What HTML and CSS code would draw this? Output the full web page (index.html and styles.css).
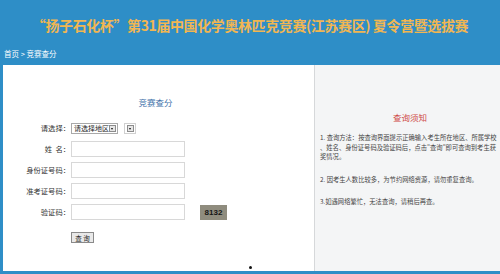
FILE: index.html
```html
<!DOCTYPE html>
<html lang="zh-CN">
<head>
<meta charset="utf-8">
<title>竞赛查分</title>
<link rel="stylesheet" href="styles.css">
</head>
<body>
<div class="page">
  <header class="header">
    <h1 class="title">“扬子石化杯”第31届中国化学奥林匹克竞赛(江苏赛区) 夏令营暨选拔赛</h1>
    <div class="crumb">首页 &gt; 竞赛查分</div>
  </header>
  <main class="panel">
    <section class="left">
      <h2 class="form-title">竞赛查分</h2>
      <div class="form">
        <div class="row row-select">
          <span class="label">请选择：</span>
          <div class="field">
            <span class="select select-wide">请选择地区<span class="arrow"></span></span>
            <span class="select select-small"><span class="arrow"></span></span>
          </div>
        </div>
        <div class="row">
          <span class="label">姓&nbsp;&nbsp;名：</span>
          <div class="field"><span class="input"></span></div>
        </div>
        <div class="row">
          <span class="label">身份证号码：</span>
          <div class="field"><span class="input"></span></div>
        </div>
        <div class="row">
          <span class="label">准考证号码：</span>
          <div class="field"><span class="input"></span></div>
        </div>
        <div class="row">
          <span class="label">验证码：</span>
          <div class="field"><span class="input"></span><span class="captcha">8132</span></div>
        </div>
        <div class="row row-btn">
          <span class="label"></span>
          <div class="field"><span class="btn">查 询</span></div>
        </div>
      </div>
    </section>
    <section class="right">
      <h3 class="notice-title">查询须知</h3>
      <p class="note">1. 查询方法：按查询界面提示正确输入考生所在地区、所属学校、姓名、身份证号码及验证码后，点击"查询"即可查询到考生获奖情况。</p>
      <p class="note">2. 因考生人数比较多，为节约网络资源，请勿重复查询。</p>
      <p class="note">3.如遇网络繁忙，无法查询，请稍后再查。</p>
    </section>
    <span class="dot"></span>
  </main>
</div>
</body>
</html>
```

FILE: styles.css
```css
html, body {
  margin: 0;
  padding: 0;
}
body {
  width: 500px;
  height: 274px;
  overflow: hidden;
  background: #2e8ec7;
  font-family: "Noto Sans CJK SC", "Noto Sans", sans-serif;
}
.page {
  display: flex;
  flex-direction: column;
  height: 274px;
}
.header {
  height: 65px;
  padding-top: 15px;
  box-sizing: border-box;
}
.title {
  margin: 0;
  text-align: center;
  font-size: 14px;
  line-height: 20px;
  font-weight: bold;
  color: #f1b652;
  letter-spacing: -0.4px;
  white-space: nowrap;
}
.crumb {
  margin: 13px 0 0 4px;
  font-size: 7.5px;
  line-height: 12px;
  color: #ffffff;
}
.panel {
  position: relative;
  display: flex;
  margin-left: 3px;
  height: 206px;
}
.left {
  width: 311px;
  background: #ffffff;
  border-right: 1px solid #d6d8da;
}
.form-title {
  margin: 31px 0 0 0;
  padding-right: 6px;
  text-align: center;
  font-size: 8.5px;
  line-height: 12px;
  font-weight: normal;
  color: #3f72aa;
}
.form {
  display: flex;
  flex-direction: column;
  gap: 5px;
  margin-top: 14px;
}
.row {
  display: flex;
  align-items: center;
  height: 16px;
}
.row-select {
  height: 12px;
  margin-bottom: 2px;
}
.row-btn {
  margin-top: 7px;
  height: 11px;
}
.label {
  width: 67px;
  text-align: right;
  font-size: 7.3px;
  color: #333333;
  flex-shrink: 0;
}
.field {
  display: flex;
  align-items: center;
  margin-left: 1px;
}
.select {
  display: flex;
  align-items: center;
  height: 11px;
  box-sizing: border-box;
  border: 1px solid #a9a9a9;
  background: #ffffff;
  font-size: 7px;
  color: #222222;
  padding-left: 2px;
}
.select-wide {
  width: 47px;
  justify-content: space-between;
  padding-right: 1px;
}
.select-small {
  width: 12px;
  margin-left: 6px;
  justify-content: flex-end;
  padding-right: 1px;
  border-color: #d0d0d0;
}
.arrow {
  position: relative;
  width: 7px;
  height: 7px;
  box-sizing: border-box;
  border: 1px solid #8c8c8c;
  background: #e6e6e6;
}
.arrow::after {
  content: "";
  position: absolute;
  left: 1px;
  top: 2px;
  border-left: 1.5px solid transparent;
  border-right: 1.5px solid transparent;
  border-top: 2px solid #111111;
}
.input {
  display: block;
  width: 114px;
  height: 16px;
  box-sizing: border-box;
  border: 1px solid #d8d8d8;
  background: #ffffff;
}
.captcha {
  margin-left: 15px;
  width: 27px;
  height: 15px;
  display: flex;
  align-items: center;
  justify-content: center;
  background: #8f8c7e;
  color: #151515;
  font-family: "Liberation Sans", Arial, sans-serif;
  font-weight: bold;
  font-size: 8px;
}
.btn {
  display: flex;
  align-items: center;
  justify-content: center;
  width: 23px;
  height: 11px;
  box-sizing: border-box;
  border: 1px solid #8a8a8a;
  background: #e9e9e9;
  font-size: 6.5px;
  color: #222222;
}
.right {
  flex: 1;
  background: #f4f5f6;
  padding: 0 0 0 5px;
}
.notice-title {
  margin: 46px 0 0 0;
  text-align: center;
  font-size: 8.5px;
  line-height: 12px;
  font-weight: normal;
  color: #cf4a46;
}
.note {
  margin: 10px 0 0 0;
  font-size: 6.3px;
  line-height: 9.5px;
  color: #444444;
  line-break: anywhere;
}
.note + .note {
  margin-top: 13px;
}
.dot {
  position: absolute;
  left: 246px;
  top: 201px;
  width: 3px;
  height: 3px;
  border-radius: 50%;
  background: #111111;
}
```
